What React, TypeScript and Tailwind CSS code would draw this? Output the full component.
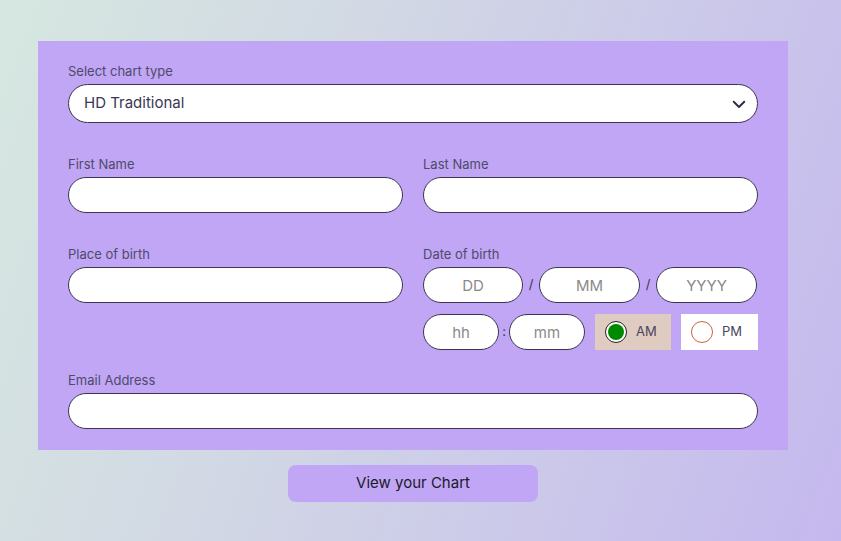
import React from 'react';

const font = { fontFamily: 'Inter, "Noto Sans", sans-serif' };

const Field: React.FC<{ label: string }> = ({ label }) => (
  <div className="flex flex-col">
    <label className="text-[13px] leading-4 text-[#4f4a6b] mb-[5px]">{label}</label>
    <input className="h-[36px] w-full rounded-full border border-[#3a3550] bg-white px-4 text-[15px] outline-none" />
  </div>
);

const Pill: React.FC<{ ph: string; w: string }> = ({ ph, w }) => (
  <input
    placeholder={ph}
    className={`h-[36px] ${w} rounded-full border border-[#3a3550] bg-white text-center text-[15px] text-[#333] placeholder:text-[#8a8a8a] outline-none`}
  />
);

export default function App() {
  return (
    <div
      className="min-h-[541px] w-full bg-[linear-gradient(110deg,#d6e7e0_0%,#d2d9e4_35%,#cbc8ea_70%,#c5b8ee_100%)] pt-[41px] pb-10"
      style={font}
    >
      <div className="ml-[38px] w-[750px]">
        <div className="bg-[#c0a6f5] px-[30px] pt-[22px] pb-[21px]">
          {/* chart type */}
          <label className="block text-[13px] leading-4 text-[#4f4a6b] mb-[5px]">Select chart type</label>
          <div className="flex h-[39px] items-center justify-between rounded-full border border-[#3a3550] bg-white pl-[15px] pr-[9px]">
            <span className="text-[15px] text-[#3a3852]">HD Traditional</span>
            <svg width="18" height="18" viewBox="0 0 24 24" fill="none" stroke="#2f2d45" strokeWidth="2.6" strokeLinecap="round" strokeLinejoin="round">
              <path d="M5 9l7 7 7-7" />
            </svg>
          </div>

          <div className="mt-[33px] grid grid-cols-[335px_1fr] gap-x-[20px]">
            <Field label="First Name" />
            <Field label="Last Name" />
          </div>

          <div className="mt-[33px] grid grid-cols-[335px_1fr] gap-x-[20px]">
            <div className="self-start">
              <Field label="Place of birth" />
            </div>
            <div className="flex flex-col">
              <label className="text-[13px] leading-4 text-[#4f4a6b] mb-[5px]">Date of birth</label>
              <div className="flex items-center">
                <Pill ph="DD" w="w-[100px]" />
                <span className="w-[16px] text-center text-[13px] text-[#3a3550]">/</span>
                <Pill ph="MM" w="w-[101px]" />
                <span className="w-[16px] text-center text-[13px] text-[#3a3550]">/</span>
                <Pill ph="YYYY" w="w-[101px]" />
              </div>
              <div className="mt-[11px] flex items-center">
                <Pill ph="hh" w="w-[76px]" />
                <span className="w-[10px] text-center text-[13px] text-[#3a3550]">:</span>
                <Pill ph="mm" w="w-[76px]" />
                <div className="ml-[10px] flex h-[36px] w-[76px] items-center bg-[#e0cbc0] pl-[10px]">
                  <span className="flex h-[22px] w-[22px] items-center justify-center rounded-full border border-[#222] bg-white">
                    <span className="h-[16px] w-[16px] rounded-full bg-[#008a00]" />
                  </span>
                  <span className="ml-[9px] text-[13px] text-[#4a4560]">AM</span>
                </div>
                <div className="ml-[10px] flex h-[36px] w-[77px] items-center bg-white pl-[10px]">
                  <span className="h-[22px] w-[22px] rounded-full border border-[#c8623e] bg-white" />
                  <span className="ml-[9px] text-[13px] text-[#4a4560]">PM</span>
                </div>
              </div>
            </div>
          </div>

          <div className="mt-[22px]">
            <Field label="Email Address" />
          </div>
        </div>

        <div className="mt-[15px] flex justify-center">
          <button className="h-[37px] w-[250px] rounded-[8px] bg-[#c0a6f5] text-[15px] text-[#1c1a2a]">
            View your Chart
          </button>
        </div>
      </div>
    </div>
  );
}
